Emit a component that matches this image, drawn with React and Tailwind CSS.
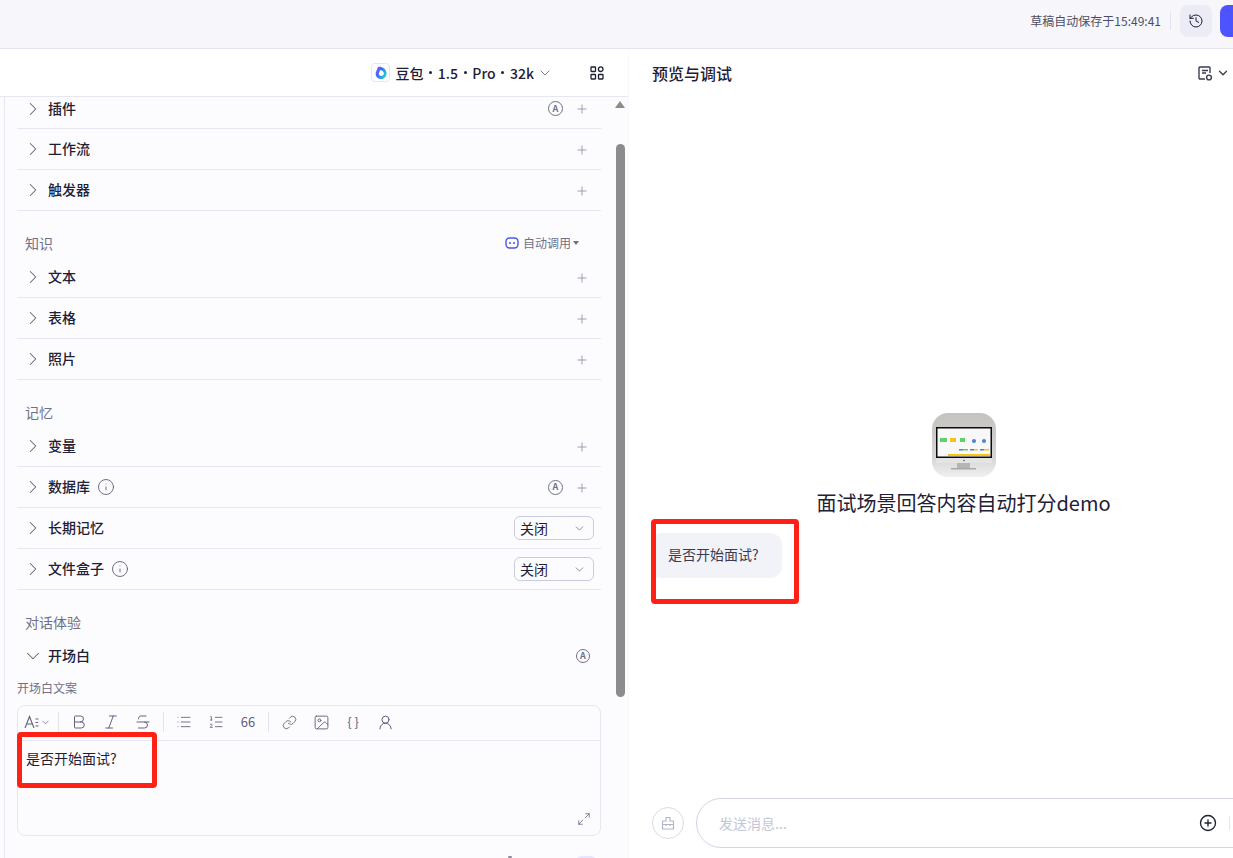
import React from "react";
import {
  ChevronRight,
  ChevronDown,
  Plus,
  History,
  Info,
  Bold,
  Italic,
  Strikethrough,
  List,
  ListOrdered,
  Link,
  Image,
  UserRound,
  Maximize2,
  CirclePlus,
} from "lucide-react";

function AutoIcon({ size = 16 }) {
  return (
    <span
      className="flex items-center justify-center rounded-full border-[1.5px] border-[#6f7088] text-[9px] font-bold text-[#6f7088]"
      style={{ width: size, height: size }}
    >
      A
    </span>
  );
}

function Row({ title, info, auto, plus = true, select, height = "h-[41px]", open, last, extra = "" }) {
  return (
    <div
      className={`flex items-center ${height} ${extra} ${last ? "" : "border-b border-[#e6e7f1]"}`}
    >
      <div className="w-[31px] flex justify-center">
        {open ? (
          <ChevronDown size={22} strokeWidth={1.1} className="text-[#5f6077]" />
        ) : (
          <ChevronRight size={22} strokeWidth={1.1} className="text-[#5f6077]" />
        )}
      </div>
      <span className="pb-[2px] text-sm font-medium text-[#1f2035]">{title}</span>
      {info && <Info size={18} strokeWidth={1.2} className="ml-[7px] text-[#5f6077]" />}
      <div className="flex-1" />
      {auto && <AutoIcon size={auto === "small" ? 14 : 15} />}
      {auto === "small" && <div className="w-[11px]" />}
      {plus && <Plus size={14} strokeWidth={1.4} className="mt-[1px] ml-[12px] mr-[12px] text-[#8c8da3]" />}
      {select && (
        <div className="flex items-center justify-between w-[80px] h-[24px] mr-[7px] px-[5px] rounded-md border border-[#c9cbe0] text-sm text-[#1f2035]">
          <span>关闭</span>
          <ChevronDown size={13} strokeWidth={1.3} className="mr-[2px] text-[#5f6077]" />
        </div>
      )}
    </div>
  );
}

function SectionTitle({ children, right }) {
  return (
    <div className="flex items-center justify-between h-[46px] pt-[22px] pb-[4px] pl-[8px]">
      <span className="text-sm text-[#6f7088]">{children}</span>
      {right}
    </div>
  );
}

function Toolbar() {
  const cls = "text-[#5f6077]";
  const Cell = ({ children }) => (
    <div className="w-[32px] flex items-center justify-center">{children}</div>
  );
  const Sep = () => <div className="w-px h-[20px] bg-[#e3e4ef] mx-[4px]" />;
  return (
    <div className="flex items-center h-[35px] pb-[2px] border-b border-[#e6e7f1] pl-[6px]">
      <div className="flex items-center w-[30px] text-[#5f6077]">
        <svg width="15" height="14" viewBox="0 0 15 14" fill="none" stroke="currentColor" strokeWidth="1.1">
          <path d="M1 13 5.5 1.5 10 13M2.6 9h5.8M11.5 4H14.5M11.5 7.5H14M11.5 11H14.5" />
        </svg>
        <ChevronDown size={11} strokeWidth={1.5} className="ml-[1px]" />
      </div>
      <Sep />
      <Cell><Bold size={18} strokeWidth={1.3} className={cls} /></Cell>
      <Cell><Italic size={18} strokeWidth={1.3} className={cls} /></Cell>
      <Cell><Strikethrough size={18} strokeWidth={1.3} className={cls} /></Cell>
      <Sep />
      <Cell><List size={16} strokeWidth={1.3} className={cls} /></Cell>
      <Cell><ListOrdered size={16} strokeWidth={1.3} className={cls} /></Cell>
      <Cell><span className="text-[13px] font-normal text-[#5f6077]">66</span></Cell>
      <Sep />
      <Cell><Link size={15} strokeWidth={1.4} className={cls} /></Cell>
      <Cell><Image size={17} strokeWidth={1.3} className={cls} /></Cell>
      <Cell><span className="text-[13px] text-[#5f6077]">{"{ }"}</span></Cell>
      <Cell><UserRound size={17} strokeWidth={1.4} className={cls} /></Cell>
    </div>
  );
}

function BotAvatar() {
  return (
    <svg width="64" height="64" viewBox="0 0 64 64" className="rounded-[16px]">
      <defs>
        <linearGradient id="wall" x1="0" y1="0" x2="0" y2="1">
          <stop offset="0" stopColor="#c4c3c0" />
          <stop offset="0.7" stopColor="#d6d5d3" />
          <stop offset="1" stopColor="#f0f0f0" />
        </linearGradient>
      </defs>
      <rect width="64" height="64" fill="url(#wall)" />
      <rect x="4" y="14" width="56" height="31" fill="#0c0c0c" />
      <rect x="4" y="45" width="56" height="5" fill="#e4e4e4" />
      <circle cx="32" cy="47.5" r="0.7" fill="#444" />
      <rect x="5.5" y="15.5" width="53" height="28" fill="#f8f8f8" />
      <rect x="8" y="25" width="7" height="4" fill="#5fd06a" />
      <rect x="18" y="25" width="6" height="4" fill="#f5c518" />
      <rect x="28" y="25" width="5" height="4" fill="#5fd06a" />
      <circle cx="42" cy="28" r="2" fill="#4f7fd8" />
      <circle cx="52" cy="28" r="2" fill="#4f7fd8" />
      <rect x="27" y="36" width="4" height="1.5" fill="#4f7fd8" />
      <rect x="31" y="36" width="5" height="1.5" fill="#5fd06a" />
      <rect x="38" y="36" width="4" height="1.5" fill="#4f7fd8" />
      <rect x="42" y="36" width="4" height="1.5" fill="#f5c518" />
      <rect x="48" y="36" width="4" height="1.5" fill="#4f7fd8" />
      <rect x="52" y="36" width="5" height="1.5" fill="#f5c518" />
      <rect x="16" y="41" width="42" height="2" fill="#f5c518" />
      <rect x="25" y="50" width="13" height="5" fill="#b5b5b5" />
      <rect x="19" y="55" width="25" height="1.5" fill="#a9a9a9" />
    </svg>
  );
}

function Dot() {
  return <span className="w-[3px] h-[3px] rounded-full bg-[#1f2035]" />;
}

export default function App() {
  return (
    <div
      className="relative w-[1233px] h-[858px] overflow-hidden bg-white"
      style={{ fontFamily: '"Noto Sans CJK SC", "Noto Sans", sans-serif' }}
    >
      {/* top bar */}
      <div className="flex items-center justify-end h-[49px] pt-[5px] pb-[11px] bg-[#f7f7fb] border-b border-[#e4e5f2]">
        <span className="text-xs text-[#4d4e66]">草稿自动保存于15:49:41</span>
        <div className="w-px h-[18px] bg-[#e3e4ef] ml-[9px] mr-[9px]" />
        <div className="flex items-center justify-center w-[32px] h-[32px] rounded-lg bg-[#ebecf5]">
          <History size={16} strokeWidth={1.5} className="text-[#1f2035]" />
        </div>
        <div className="w-[13px] h-[32px] ml-[8px] rounded-l-lg bg-[#4d53ff]" />
      </div>

      <div className="flex">
        {/* left side */}
        <div className="w-[628px] shrink-0 h-[809px] bg-[#fcfcff]">
          <div className="flex items-center justify-end h-[48px] bg-white border-b border-[#e6e7f1] pr-[24px]">
            <div className="flex items-center justify-center w-[19px] h-[19px] rounded-[4px] border border-[#e6e7f1] mr-[5px]">
              <svg width="14" height="14" viewBox="0 0 14 14">
                <defs>
                  <linearGradient id="db" x1="0" y1="0" x2="1" y2="0.6">
                    <stop offset="0" stopColor="#9a4dff" />
                    <stop offset="0.45" stopColor="#3a6bff" />
                    <stop offset="1" stopColor="#21d4c4" />
                  </linearGradient>
                </defs>
                <path d="M4 .8C8 .2 12.6 3 12.6 7.5 12.6 11 9.5 13.4 6 13 3.2 12.7 1.6 10 1.6 7Z" fill="url(#db)" />
                <path d="M6 4.2C8 3.8 9.8 5.4 9.8 7.4 9.8 9 8.6 10 7 9.9 5.6 9.8 4.8 8.6 4.8 7.4Z" fill="#fff" />
              </svg>
            </div>
            <span className="flex items-center gap-[5.7px] text-sm font-medium text-[#1f2035]">
              <span>豆包</span>
              <Dot />
              <span>1.5</span>
              <Dot />
              <span>Pro</span>
              <Dot />
              <span>32k</span>
            </span>
            <ChevronDown size={16} strokeWidth={1.2} className="ml-[3px] mr-[37px] text-[#5f6077]" />
            <svg width="14" height="14" viewBox="0 0 14 14" fill="none" stroke="#1f2035" strokeWidth="1.3">
              <rect x="1" y="1" width="4.5" height="4.5" rx="0.5" />
              <circle cx="10.7" cy="3.2" r="2.3" />
              <rect x="1" y="8.5" width="4.5" height="4.5" rx="0.5" />
              <rect x="8.5" y="8.5" width="4.5" height="4.5" rx="0.5" />
            </svg>
          </div>

          <div className="flex h-[761px] ml-[4px] border-l border-[#e6e7f1]">
            <div className="w-[584px] ml-[12px]">
              <Row title="插件" auto height="h-[32px]" extra="pb-[8px]" />
              <Row title="工作流" />
              <Row title="触发器" />
              <SectionTitle
                right={
                  <div className="flex items-center mr-[22px] text-xs text-[#6f7088]">
                    <svg width="14" height="12" viewBox="0 0 14 12" className="mr-[4px]">
                      <rect x="1" y="1" width="12" height="10" rx="3.5" fill="none" stroke="#4d53e8" strokeWidth="1.4" />
                      <circle cx="5" cy="6" r="1" fill="#4d53e8" />
                      <circle cx="9" cy="6" r="1" fill="#4d53e8" />
                    </svg>
                    自动调用
                    <span className="ml-[2px] border-x-[3px] border-t-[4px] border-x-transparent border-t-[#6f7088]" />
                  </div>
                }
              >
                知识
              </SectionTitle>
              <Row title="文本" />
              <Row title="表格" />
              <Row title="照片" />
              <SectionTitle>记忆</SectionTitle>
              <Row title="变量" />
              <Row title="数据库" info auto />
              <Row title="长期记忆" plus={false} select />
              <Row title="文件盒子" info plus={false} select />
              <SectionTitle>对话体验</SectionTitle>
              <Row title="开场白" open last auto="small" plus={false} height="h-[40px]" />
              <div className="text-xs text-[#6f7088] h-[29px] pt-[4px]">开场白文案</div>
              <div className="relative h-[131px] rounded-lg border border-[#e6e7f1]">
                <Toolbar />
                <div className="px-[8px] pt-[7px] text-sm text-[#1f2035]">是否开始面试?</div>
                <Maximize2 size={14} strokeWidth={1.3} className="absolute right-[9px] bottom-[9px] text-[#5f6077]" />
              </div>
              <div className="flex items-start justify-end mt-[20px] mr-[3px]">
                <div className="w-[4px] h-[2px] mr-[62px] rounded-full bg-[#8c8da3]" />
                <div className="w-[24px] h-[16px] rounded-full bg-[#e6e6ff]" />
              </div>
            </div>
            {/* scrollbar */}
            <div className="flex flex-col items-center w-[10px] ml-[14px]">
              <div className="mt-[4px] border-x-[5px] border-b-[7px] border-x-transparent border-b-[#8c8c8c]" />
              <div className="w-[9px] h-[553px] mt-[36px] rounded-full bg-[#8c8c8c]" />
            </div>
          </div>
        </div>

        {/* right side */}
        <div className="flex-1 min-w-0 flex flex-col h-[809px] bg-white border-l border-[#f9f9fc]">
          <div className="flex items-center justify-between h-[48px] pl-[23px] pr-[3px]">
            <span className="text-base font-medium text-[#1f2035]">预览与调试</span>
            <div className="flex items-center gap-[3px] text-[#3a3b52]">
              <svg width="16" height="16" viewBox="0 0 16 16" fill="none" stroke="currentColor" strokeWidth="1.4">
                <path d="M8 14H3a1 1 0 0 1-1-1V3a1 1 0 0 1 1-1h9a1 1 0 0 1 1 1v5" />
                <path d="M5 5.5h6M5 8h4" />
                <circle cx="12" cy="12.5" r="2.4" />
              </svg>
              <ChevronDown size={14} strokeWidth={2.2} />
            </div>
          </div>

          <div className="flex-1 flex flex-col">
            <div className="flex flex-col items-center pt-[316px] pl-[27px] w-[642px]">
              <BotAvatar />
              <div className="mt-[10px] text-xl leading-[32px] text-[#1f2035] whitespace-nowrap">
                面试场景回答内容自动打分demo
              </div>
            </div>
            <div className="ml-[25px] mt-[14px] w-[128px] h-[45px] flex items-center pl-[14px] pb-[3px] rounded-r-xl rounded-l-md bg-[#f2f3f8] text-sm text-[#3a3b52]">
              是否开始面试?
            </div>
          </div>

          <div className="flex items-center h-[50px] pl-[23px] mb-[10px]">
            <div className="flex items-center justify-center w-[32px] h-[32px] rounded-full border border-[#d9daea]">
              <svg width="16" height="16" viewBox="0 0 16 16" fill="none" stroke="#b3b5cc" strokeWidth="1.2">
                <path d="M6 2.5h4v3.5H13.5v8h-11v-8H6Z" />
                <path d="M2.5 9.5h11M6 9.5v1.5M10 9.5v1.5" />
              </svg>
            </div>
            <div className="flex items-center flex-1 h-[50px] ml-[12px] -mr-[40px] pl-[22px] rounded-l-[25px] border border-[#d3d5e6]">
              <span className="text-sm text-[#c4c6d8]">发送消息...</span>
              <div className="flex-1" />
              <CirclePlus size={18} strokeWidth={1.8} className="text-[#1f2035] mr-[12px]" />
              <div className="w-px h-[14px] bg-[#e3e4ef] mr-[42px]" />
            </div>
          </div>
        </div>
      </div>

      {/* red annotation frames */}
      <div className="absolute left-[17px] top-[732px] w-[140px] h-[56px] rounded-[4px] border-[5px] border-[#ff2115]" />
      <div className="absolute left-[651px] top-[519px] w-[148px] h-[85px] rounded-[4px] border-[5px] border-[#ff2115]" />
    </div>
  );
}
